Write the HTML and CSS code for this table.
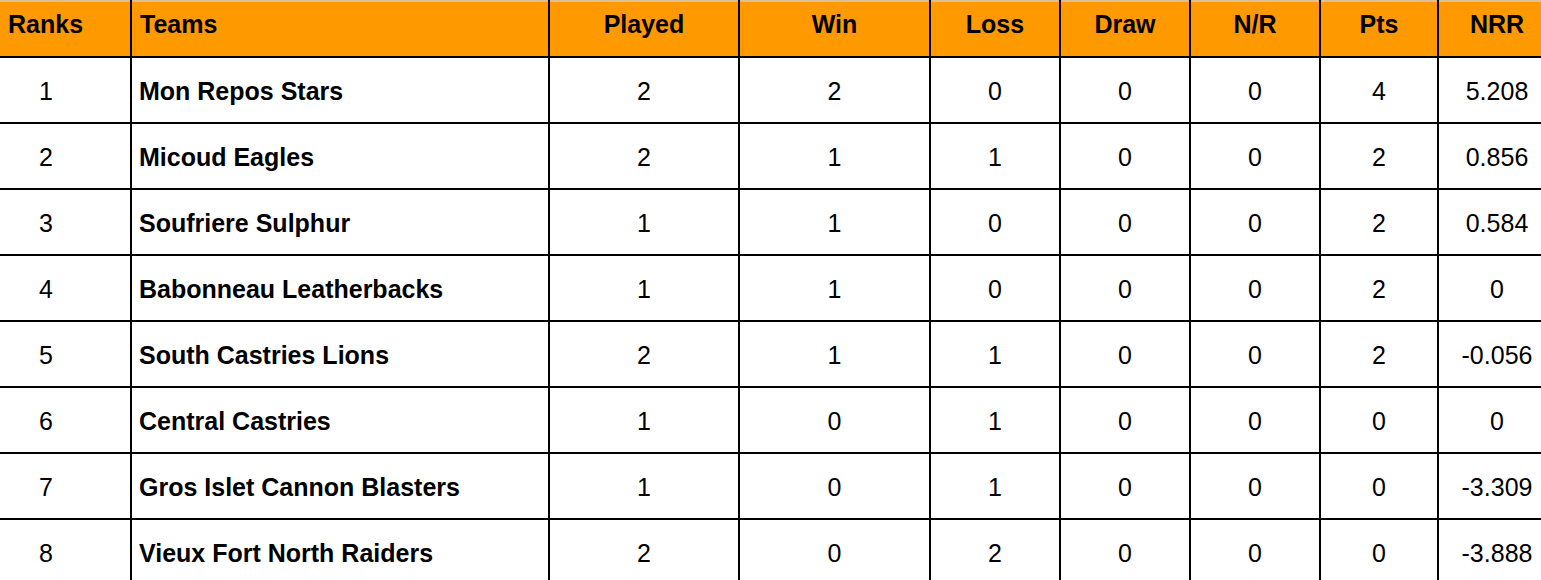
FILE: index.html
```
<!DOCTYPE html>
<html lang="en">
<head>
<meta charset="utf-8">
<title>Points Table</title>
<link rel="stylesheet" href="styles.css">
</head>
<body>
<table class="standings">
  <colgroup>
    <col class="c-rank"><col class="c-team"><col class="c-played"><col class="c-win"><col class="c-loss"><col class="c-draw"><col class="c-nr"><col class="c-pts"><col class="c-nrr">
  </colgroup>
  <thead>
    <tr>
      <th class="left">Ranks</th>
      <th class="left">Teams</th>
      <th>Played</th>
      <th>Win</th>
      <th>Loss</th>
      <th>Draw</th>
      <th>N/R</th>
      <th>Pts</th>
      <th>NRR</th>
    </tr>
  </thead>
  <tbody>
    <tr><td class="rank">1</td><td class="team">Mon Repos Stars</td><td>2</td><td>2</td><td>0</td><td>0</td><td>0</td><td>4</td><td>5.208</td></tr>
    <tr><td class="rank">2</td><td class="team">Micoud Eagles</td><td>2</td><td>1</td><td>1</td><td>0</td><td>0</td><td>2</td><td>0.856</td></tr>
    <tr><td class="rank">3</td><td class="team">Soufriere Sulphur</td><td>1</td><td>1</td><td>0</td><td>0</td><td>0</td><td>2</td><td>0.584</td></tr>
    <tr><td class="rank">4</td><td class="team">Babonneau Leatherbacks</td><td>1</td><td>1</td><td>0</td><td>0</td><td>0</td><td>2</td><td>0</td></tr>
    <tr><td class="rank">5</td><td class="team">South Castries Lions</td><td>2</td><td>1</td><td>1</td><td>0</td><td>0</td><td>2</td><td>-0.056</td></tr>
    <tr><td class="rank">6</td><td class="team">Central Castries</td><td>1</td><td>0</td><td>1</td><td>0</td><td>0</td><td>0</td><td>0</td></tr>
    <tr><td class="rank">7</td><td class="team">Gros Islet Cannon Blasters</td><td>1</td><td>0</td><td>1</td><td>0</td><td>0</td><td>0</td><td>-3.309</td></tr>
    <tr><td class="rank">8</td><td class="team">Vieux Fort North Raiders</td><td>2</td><td>0</td><td>2</td><td>0</td><td>0</td><td>0</td><td>-3.888</td></tr>
  </tbody>
</table>
</body>
</html>
```
FILE: styles.css
```
html, body {
  margin: 0;
  padding: 0;
  background: #ffffff;
  overflow: hidden;
}

.standings {
  border-collapse: collapse;
  table-layout: fixed;
  width: 1555px;
  font-family: "Liberation Sans", Arial, sans-serif;
  font-size: 25px;
  color: #000;
}

.c-rank { width: 131px; }
.c-team { width: 418px; }
.c-played { width: 190px; }
.c-win { width: 191px; }
.c-loss { width: 130px; }
.c-draw { width: 130px; }
.c-nr { width: 130px; }
.c-pts { width: 118px; }
.c-nrr { width: 117px; }

.standings th,
.standings td {
  border: 2px solid #000;
  padding: 0;
  white-space: nowrap;
  overflow: hidden;
}

.standings th:first-child,
.standings td:first-child {
  border-left: none;
}

.standings th:last-child,
.standings td:last-child {
  border-right: none;
}

.standings thead th {
  background: #ff9900;
  font-weight: bold;
  text-align: center;
  vertical-align: top;
  height: 46px;
  padding-top: 8px;
  border-top: 2px solid #d9c19c;
}

.standings thead th.left {
  text-align: left;
  padding-left: 8px;
}

.standings tbody td {
  height: 62px;
  padding-top: 2px;
  text-align: center;
  vertical-align: middle;
  font-weight: normal;
}

.standings tbody td.rank {
  padding-right: 38px;
}

.standings tbody td.team {
  text-align: left;
  font-weight: bold;
  padding-left: 7px;
}
```
